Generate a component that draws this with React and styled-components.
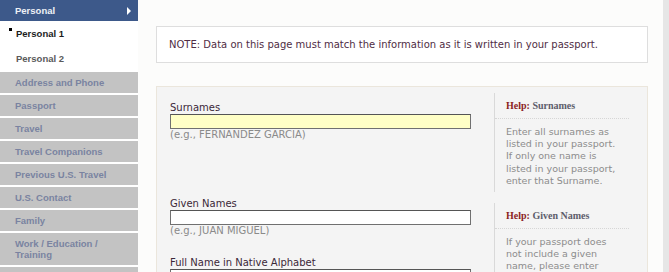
import styled, { createGlobalStyle } from "styled-components";

const GlobalStyle = createGlobalStyle`
  html, body {
    margin: 0;
    padding: 0;
    background: #ffffff;
  }
`;

const subItems = [
  { label: "Personal 1", active: true },
  { label: "Personal 2", active: false },
];

const sections = [
  "Address and Phone",
  "Passport",
  "Travel",
  "Travel Companions",
  "Previous U.S. Travel",
  "U.S. Contact",
  "Family",
  "Work / Education / Training",
  "Security and Background",
];

export default function App() {
  return (
    <>
      <GlobalStyle />
      <Page>
        <Sidebar>
          <Header>
            <span>Personal</span>
            <Arrow />
          </Header>
          {subItems.map((item) => (
            <SubItem key={item.label} $active={item.active}>
              {item.active && <Bullet />}
              {item.label}
            </SubItem>
          ))}
          <SectionList>
            {sections.map((s) => (
              <Section key={s}>{s}</Section>
            ))}
          </SectionList>
        </Sidebar>

        <Main>
          <Note>
            NOTE: Data on this page must match the information as it is written
            in your passport.
          </Note>

          <Panel>
            <Row>
              <Fields $pad={14}>
                <Label>Surnames</Label>
                <Input $yellow />
                <Hint>(e.g., FERNANDEZ GARCIA)</Hint>
              </Fields>
              <Help>
                <HelpTitle>
                  <em>Help:</em> Surnames
                </HelpTitle>
                <HelpText>
                  Enter all surnames as listed in your passport. If only one
                  name is listed in your passport, enter that Surname.
                </HelpText>
              </Help>
            </Row>
            <Row>
              <Fields $pad={0}>
                <Label>Given Names</Label>
                <Input />
                <Hint>(e.g., JUAN MIGUEL)</Hint>
                <Label $top={19}>Full Name in Native Alphabet</Label>
                <Input />
              </Fields>
              <Help>
                <HelpTitle>
                  <em>Help:</em> Given Names
                </HelpTitle>
                <HelpText>
                  If your passport does not include a given name, please enter
                  'FNU' in Given Names.
                </HelpText>
              </Help>
            </Row>
          </Panel>
        </Main>
        <Edge />
      </Page>
    </>
  );
}

const Page = styled.div`
  display: flex;
  height: 272px;
  overflow: hidden;
  background: #fcfcfb;
`;

const Sidebar = styled.div`
  width: 138px;
  flex-shrink: 0;
  display: flex;
  flex-direction: column;
  background: #ffffff;
  font-family: "Liberation Sans", Arial, sans-serif;
  font-size: 9.5px;
  font-weight: bold;

  & > * {
    flex-shrink: 0;
  }
`;

const Header = styled.div`
  height: 21px;
  display: flex;
  align-items: center;
  justify-content: space-between;
  padding: 0 7px 0 15px;
  background: #3d598a;
  color: #eef1f6;
`;

const Arrow = styled.div`
  width: 0;
  height: 0;
  border-top: 4px solid transparent;
  border-bottom: 4px solid transparent;
  border-left: 4px solid #ffffff;
`;

const SubItem = styled.div`
  position: relative;
  height: 25px;
  display: flex;
  align-items: center;
  padding-left: 16px;
  color: ${(p) => (p.$active ? "#1c1c1c" : "#5a5a5a")};
`;

const Bullet = styled.span`
  position: absolute;
  left: 9px;
  top: 7px;
  width: 3px;
  height: 3px;
  background: #000;
`;

const SectionList = styled.div`
  display: flex;
  flex-direction: column;
  gap: 2px;
  margin-top: 1px;

  & > * {
    flex-shrink: 0;
  }
`;

const Section = styled.div`
  padding: 5px 20px 5px 15px;
  line-height: 11px;
  background: #c3c3c3;
  color: #7a83a1;
`;

const Main = styled.div`
  flex: 1;
  padding: 26px 15px 0 18px;
  font-family: "DejaVu Sans", Verdana, sans-serif;
`;

const Edge = styled.div`
  width: 6px;
  flex-shrink: 0;
  background: #e6e6e6;
`;

const Note = styled.div`
  background: #ffffff;
  border: 1px solid #dedede;
  padding: 0 12px;
  height: 35px;
  display: flex;
  align-items: center;
  font-size: 10px;
  color: #4f2d44;
  white-space: nowrap;
`;

const Panel = styled.div`
  margin-top: 23px;
  background: #f4f4f4;
  border: 1px solid #ebe6dc;
`;

const Row = styled.div`
  display: flex;
`;

const Fields = styled.div`
  width: 337px;
  flex-shrink: 0;
  padding: ${(p) => p.$pad}px 0 0 13px;
  box-sizing: border-box;
`;

const Label = styled.div`
  margin-top: ${(p) => p.$top || 0}px;
  font-size: 10px;
  line-height: 13px;
  color: #3b2838;
`;

const Input = styled.div`
  width: 301px;
  height: 15px;
  box-sizing: border-box;
  border: 1px solid #707070;
  border-top-color: #555;
  background: ${(p) => (p.$yellow ? "#ffffc6" : "#ffffff")};
`;

const Hint = styled.div`
  font-size: 10px;
  line-height: 12px;
  color: #8a8a8a;
`;

const Help = styled.div`
  flex: 1;
  margin: 6px 0 5px;
  border-left: 1px solid #d9d9d9;
  padding: 7px 18px 5px 11px;
`;

const HelpTitle = styled.div`
  font-family: "Liberation Serif", "Times New Roman", serif;
  font-weight: bold;
  font-size: 10px;
  line-height: 12px;
  color: #5d5d6b;
  padding-bottom: 6px;
  margin-left: -11px;
  padding-left: 11px;
  border-bottom: 1px dotted #d6d6d6;

  em {
    font-style: normal;
    color: #8b1f1f;
  }
`;

const HelpText = styled.div`
  margin-top: 7px;
  width: 116px;
  font-size: 9.5px;
  line-height: 12.2px;
  color: #8c8c8c;
`;
